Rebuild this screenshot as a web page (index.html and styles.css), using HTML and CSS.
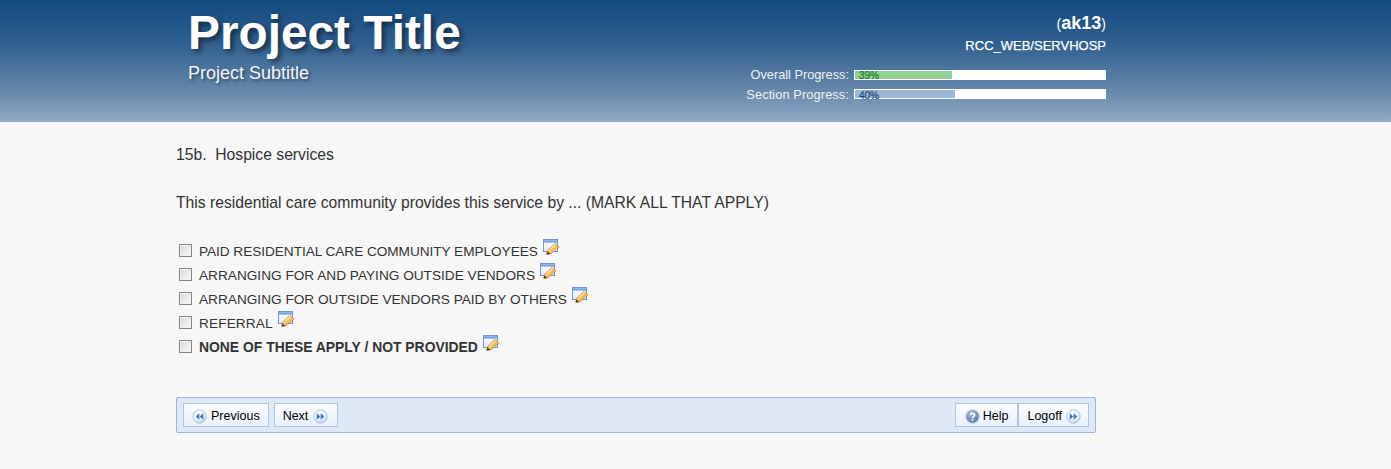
FILE: index.html
```html
<!DOCTYPE html>
<html lang="en">
<head>
<meta charset="utf-8">
<title>Project Title</title>
<link rel="stylesheet" href="styles.css">
</head>
<body>
<svg class="defs" width="0" height="0" aria-hidden="true">
  <defs>
    <linearGradient id="wg" x1="0" y1="0" x2="0" y2="1"><stop offset="0" stop-color="#fdfeff"/><stop offset="1" stop-color="#dfe9f7"/></linearGradient>
    <linearGradient id="bar" x1="0" y1="0" x2="0" y2="1"><stop offset="0" stop-color="#9cc0ee"/><stop offset="1" stop-color="#5c8ed2"/></linearGradient>
    <linearGradient id="pencil" x1="0" y1="0" x2="1" y2="1"><stop offset="0" stop-color="#fbe08a"/><stop offset="1" stop-color="#ee9d3a"/></linearGradient>
    <radialGradient id="ball" cx=".4" cy=".3" r=".8"><stop offset="0" stop-color="#ffffff"/><stop offset=".6" stop-color="#e6edf7"/><stop offset="1" stop-color="#a8bcd8"/></radialGradient>
    <radialGradient id="hball" cx=".4" cy=".3" r=".8"><stop offset="0" stop-color="#a9bfdc"/><stop offset="1" stop-color="#47699c"/></radialGradient>
    <symbol id="note" viewBox="0 0 17 16">
      <rect x=".5" y=".5" width="14" height="12" fill="url(#wg)" stroke="#6f97d6"/>
      <rect x="1" y="1" width="13" height="2.5" fill="url(#bar)"/>
      <path d="M3.6 15.6 L4.6 11.4 L12 4.4 L16.2 8 L8.4 14.6 Z" fill="url(#pencil)" stroke="#c08032" stroke-width=".6"/>
      <path d="M3.6 15.6 L4.4 12.2 L7.4 14.9 Z" fill="#5a3a20"/>
      <path d="M6 11.5 L12.6 5.6" stroke="#fff2c4" stroke-width="1"/>
    </symbol>
    <symbol id="rew" viewBox="0 0 16 16">
      <circle cx="8" cy="8" r="7.2" fill="url(#ball)" stroke="#a9bcd8" stroke-width=".8"/>
      <path d="M7.8 4.5 L4 8 L7.8 11.5 Z M12 4.5 L8.2 8 L12 11.5 Z" fill="#3a70bd"/>
    </symbol>
    <symbol id="fwd" viewBox="0 0 16 16">
      <circle cx="8" cy="8" r="7.2" fill="url(#ball)" stroke="#a9bcd8" stroke-width=".8"/>
      <path d="M4 4.5 L7.8 8 L4 11.5 Z M8.2 4.5 L12 8 L8.2 11.5 Z" fill="#3a70bd"/>
    </symbol>
    <symbol id="help" viewBox="0 0 16 16">
      <circle cx="8" cy="8" r="7.2" fill="url(#hball)" stroke="#c3d3ea" stroke-width="1.2"/>
      <path d="M5.8 6.3 C5.9 3.9 10.3 3.9 10.3 6.3 C10.3 7.9 8 7.9 8 9.6" fill="none" stroke="#fff" stroke-width="1.6"/>
      <rect x="7.1" y="10.6" width="1.8" height="1.8" fill="#fff"/>
    </symbol>
  </defs>
</svg>

<header class="banner">
  <div class="banner-inner">
    <div class="brand">
      <h1 class="title">Project Title</h1>
      <p class="subtitle">Project Subtitle</p>
    </div>
    <div class="status">
      <div class="user">(<b>ak13</b>)</div>
      <div class="path">RCC_WEB/SERVHOSP</div>
      <div class="progress-row">
        <span class="progress-label">Overall Progress:</span>
        <span class="track"><span class="fill fill-green" style="width:38.7%"></span><span class="pct pct-green">39%</span></span>
      </div>
      <div class="progress-row">
        <span class="progress-label progress-label-section">Section Progress:</span>
        <span class="track"><span class="fill fill-blue" style="width:40%"></span><span class="pct pct-blue">40%</span></span>
      </div>
    </div>
  </div>
</header>

<main class="content">
  <p class="qnum">15b.&nbsp; Hospice services</p>
  <p class="qtext">This residential care community provides this service by ... (MARK ALL THAT APPLY)</p>
  <ul class="options">
    <li class="option"><input class="check" type="checkbox"><label class="tight">PAID RESIDENTIAL CARE COMMUNITY EMPLOYEES</label><svg class="note"><use href="#note"/></svg></li>
    <li class="option"><input class="check" type="checkbox"><label>ARRANGING FOR AND PAYING OUTSIDE VENDORS</label><svg class="note"><use href="#note"/></svg></li>
    <li class="option"><input class="check" type="checkbox"><label>ARRANGING FOR OUTSIDE VENDORS PAID BY OTHERS</label><svg class="note"><use href="#note"/></svg></li>
    <li class="option"><input class="check" type="checkbox"><label class="wide">REFERRAL</label><svg class="note"><use href="#note"/></svg></li>
    <li class="option"><input class="check" type="checkbox"><label class="strong">NONE OF THESE APPLY / NOT PROVIDED</label><svg class="note"><use href="#note"/></svg></li>
  </ul>
  <nav class="toolbar">
    <div class="group">
      <button class="btn btn-prev" type="button"><svg class="ico"><use href="#rew"/></svg>Previous</button>
      <button class="btn btn-next" type="button">Next<svg class="ico"><use href="#fwd"/></svg></button>
    </div>
    <div class="group joined">
      <button class="btn btn-help" type="button"><svg class="ico"><use href="#help"/></svg>Help</button>
      <button class="btn btn-logoff" type="button">Logoff<svg class="ico"><use href="#fwd"/></svg></button>
    </div>
  </nav>
</main>
</body>
</html>
```
FILE: styles.css
```css
* { box-sizing: border-box; }
html, body { margin: 0; padding: 0; }
body {
  background: #f7f7f7;
  color: #333;
  font-family: "Liberation Sans", Arial, sans-serif;
  height: 469px;
  overflow: hidden;
}
.defs { display: block; height: 0; }

.banner {
  height: 122px;
  background: linear-gradient(to bottom, #134a7f 0%, #2f5f8f 35%, #5f82a6 70%, #93abc3 100%);
}
.banner-inner {
  width: 930px;
  margin-left: 176px;
  padding: 0 0 0 12px;
  display: flex;
  justify-content: space-between;
}
.title {
  margin: 5px 0 0;
  font-size: 47.8px;
  line-height: 55px;
  font-weight: bold;
  color: #fff;
  text-shadow: 3px 3px 5px rgba(0, 0, 0, .5);
}
.subtitle {
  margin: 3px 0 0;
  font-size: 18px;
  line-height: 21px;
  color: #f2f5f8;
  text-shadow: 2px 2px 3px rgba(0, 0, 0, .4);
}
.status { width: 370px; color: #fff; text-align: right; }
.user { margin-top: 13px; font-size: 14px; line-height: 20px; }
.user b { font-size: 18px; }
.path { margin-top: 2px; font-size: 13px; line-height: 20px; -webkit-text-stroke: .25px #fff; }
.progress-row {
  display: flex;
  justify-content: flex-end;
  align-items: center;
  height: 19px;
  font-size: 12.75px;
}
.path + .progress-row { margin-top: 9px; }
.progress-label { margin: -1px 5px 0 0; color: #eef2f6; }
.progress-label-section { margin-top: 1px; letter-spacing: .12px; }
.track {
  position: relative;
  display: block;
  width: 252px;
  height: 10px;
  background: #fff;
  padding: 1px 0 1px 1px;
}
.fill { display: block; height: 8px; }
.fill-green { background: #92cf95; }
.fill-blue { background: #9ab6d6; }
.pct {
  position: absolute;
  left: 5px;
  top: 0;
  font-size: 10px;
  line-height: 11px;
  -webkit-text-stroke: .2px currentColor;
}
.pct-green { color: #1f7a2a; }
.pct-blue { color: #15477d; top: 1px; }

.content { width: 920px; margin-left: 176px; }
.qnum { margin: 23px 0 0; font-size: 15.7px; line-height: 20px; }
.qtext { margin: 28px 0 0; font-size: 15.7px; line-height: 20px; }
.options { list-style: none; margin: 26px 0 0; padding: 0; }
.option { display: flex; align-items: center; height: 24px; font-size: 13.65px; }
.option label { margin-left: 7px; }
.option .tight { letter-spacing: -.05px; }
.option .wide { letter-spacing: .12px; }
.option .strong { font-weight: bold; font-size: 13.9px; }
.check {
  appearance: none;
  width: 13px;
  height: 13px;
  margin: -1px 0 0 3px;
  border: 1px solid #868686;
  background: linear-gradient(135deg, #d8d8d8, #fafafa);
  box-shadow: inset 0 0 0 1px #f0f0f0;
}
.note { width: 17px; height: 16px; margin: -9px 0 0 5px; }

.toolbar {
  margin-top: 38px;
  height: 36px;
  border: 1px solid #a2b6d4;
  border-radius: 2px;
  background: #dfe9f6;
  display: flex;
  justify-content: space-between;
  align-items: center;
  padding: 0 6px;
}
.group { display: flex; gap: 5px; }
.group.joined { gap: 0; }
.btn {
  display: flex;
  align-items: center;
  height: 24px;
  border: 1px solid #a9c5ec;
  background: linear-gradient(to bottom, #fbfcff, #e9f1fc);
  color: #000;
  font: 12.5px/20px "Liberation Sans", Arial, sans-serif;
  padding-top: 2px;
  padding-bottom: 0;
}
.btn-prev { padding-left: 8px; padding-right: 8px; gap: 4px; }
.btn-next { padding-left: 8px; padding-right: 9px; gap: 5px; }
.btn-help { padding-left: 9px; padding-right: 9px; gap: 3px; }
.btn-logoff { padding-left: 8px; padding-right: 7px; gap: 4px; }
.ico { width: 15px; height: 15px; }
```
